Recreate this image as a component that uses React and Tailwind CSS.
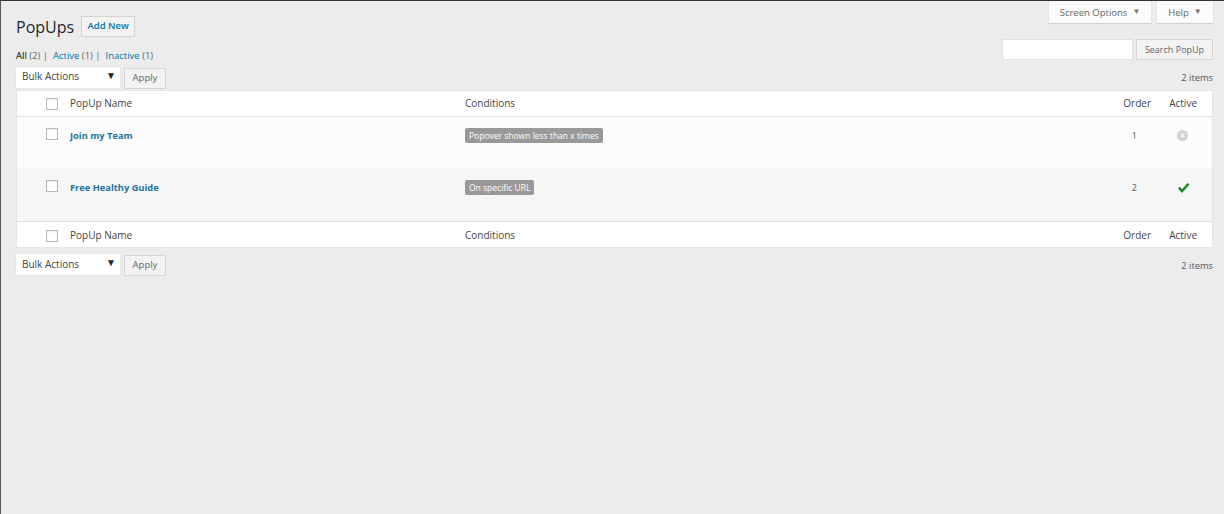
import React from "react";

const Check = () => <span className="block w-[12px] h-[12px] border border-[#b4b9be] bg-white shadow-[inset_0_1px_2px_rgba(0,0,0,0.08)]" />;

const Bulk = ({ shift }) => (
  <div className="w-[104px] h-[21px] bg-white flex items-center justify-between pl-[6px] pr-[4px] text-[10px] text-[#444] shadow-[0_0_1px_rgba(0,0,0,0.12)]">
    <span className={shift}>Bulk Actions</span>
    <span className="text-[10px] leading-none text-[#222] -mt-[5px]">▼</span>
  </div>
);

const Apply = () => (
  <div className="w-[42px] h-[21px] flex items-center justify-center bg-[#f3f3f3] border border-[#d4d4d4] text-[9.5px] text-[#666]">Apply</div>
);

const Head = ({ border }) => (
  <div className={`h-[26px] flex items-center bg-white text-[10px] text-[#444] ${border}`}>
    <div className="w-[53px] pl-[29px] shrink-0"><Check /></div>
    <div className="w-[395px] shrink-0">PopUp Name</div>
    <div className="flex-1">Conditions</div>
    <div className="w-[40px] shrink-0 text-right">Order</div>
    <div className="w-[61px] pr-[15px] shrink-0 text-right">Active</div>
  </div>
);

const Row = ({ name, cond, order, active, bg, h, pad }) => (
  <div className={`flex items-start text-[10px] ${bg} ${h} ${pad}`}>
    <div className="w-[53px] pl-[29px] shrink-0"><Check /></div>
    <div className="w-[395px] shrink-0 font-bold text-[#21759b] text-[9.3px] leading-[16px]">{name}</div>
    <div className="flex-1">
      <span className="block w-fit h-[15px] leading-[16px] px-[4px] rounded-[2px] bg-[#999] text-white text-[8.5px]">{cond}</span>
    </div>
    <div className="w-[40px] shrink-0 text-[#555] text-[9px] leading-[16px] text-right pr-[14px]">{order}</div>
    <div className="w-[61px] shrink-0 flex justify-end pt-[2px]">
      {active ? (
        <svg className="mr-[22px]" width="13" height="12" viewBox="0 0 13 12">
          <path d="M1 6.5 L3 4.8 L5 7.2 L10.5 1 L12.5 2.5 L5 11 Z" fill="#1f8a2c" />
        </svg>
      ) : (
        <svg className="mr-[24px]" width="11" height="11" viewBox="0 0 11 11">
          <circle cx="5.5" cy="5.5" r="5.5" fill="#d0d0d0" />
          <path d="M3.5 3.5 L7.5 7.5 M7.5 3.5 L3.5 7.5" stroke="#f5f5f5" strokeWidth="1.6" />
        </svg>
      )}
    </div>
  </div>
);

const Tab = ({ w, label }) => (
  <div className={`${w} h-[22px] pt-[2px] bg-[#fbfbfb] shadow-[0_1px_1px_rgba(0,0,0,0.12)] flex items-center justify-center gap-[5px] text-[9.5px] text-[#666]`}>
    {label} <span className="text-[8px] leading-none text-[#777] -mt-[4px]">▼</span>
  </div>
);

export default function App() {
  return (
    <div className="w-[1224px] h-[514px] overflow-hidden bg-[#ececec] border-t border-l border-t-[#333] border-l-[#555] font-['Open_Sans',sans-serif] relative">
      <div className="absolute top-0 right-[11px] flex gap-[6px]">
        <Tab w="w-[102px]" label="Screen Options" />
        <Tab w="w-[56px]" label="Help" />
      </div>

      <div className="pl-[15px] pr-[11px]">
        <div className="flex items-center h-[25px] mt-[14px] gap-[7px]">
          <h1 className="text-[16px] leading-[25px] text-[#23282d]">PopUps</h1>
          <div className="w-[54px] h-[21px] -mt-[2px] flex items-center justify-center bg-[#f3f3f3] border border-[#d4d4d4] text-[#0073aa] text-[9.5px] font-semibold">Add New</div>
        </div>

        <div className="flex justify-between h-[27px]">
          <div className="mt-[9px] text-[9.5px] leading-[14px] text-[#666] flex">
            <span className="text-[#000]">All</span>&nbsp;(2)&nbsp;|&nbsp;&nbsp;<span className="text-[#0073aa]">Active</span>&nbsp;(1)&nbsp;|&nbsp;&nbsp;<span className="text-[#0073aa]">Inactive</span>&nbsp;(1)
          </div>
          <div className="flex gap-[3px] -mt-[1px]">
            <div className="w-[131px] h-[21px] bg-white border border-[#e0e0e0]" />
            <div className="w-[77px] h-[21px] flex items-center justify-center bg-[#f3f3f3] border border-[#d4d4d4] text-[9px] text-[#666]">Search PopUp</div>
          </div>
        </div>

        <div className="flex items-start justify-between h-[23px]">
          <div className="flex gap-[4px]"><Bulk shift="-mt-[2px]" /><div className="mt-[1px]"><Apply /></div></div>
          <div className="text-[9.3px] text-[#555] mt-[4px]">2 items</div>
        </div>

        <div className="border border-[#e5e5e5] bg-white">
          <Head border="border-b border-[#e1e1e1]" />
          <Row name="Join my Team" cond="Popover shown less than x times" order="1" active={false} bg="bg-[#fcfcfc]" h="h-[51px]" pad="pt-[11px]" />
          <Row name="Free Healthy Guide" cond="On specific URL" order="2" active bg="bg-[#f6f6f6]" h="h-[53px]" pad="pt-[12px]" />
          <Head border="border-t border-[#e1e1e1] pt-[2px]" />
        </div>

        <div className="flex items-start justify-between mt-[6px]">
          <div className="flex gap-[4px]"><Bulk /><div className="mt-[1px]"><Apply /></div></div>
          <div className="text-[9.3px] text-[#555] mt-[5px]">2 items</div>
        </div>
      </div>
    </div>
  );
}
